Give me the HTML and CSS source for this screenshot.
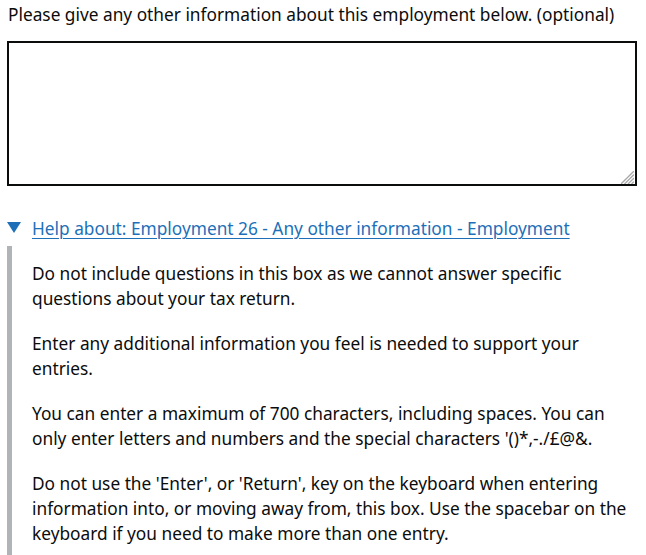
FILE: index.html
```html
<!DOCTYPE html>
<html lang="en">
<head>
<meta charset="utf-8">
<title>Any other information</title>
<link rel="stylesheet" href="styles.css">
</head>
<body>
<div class="page">
  <div class="form-group">
    <label class="label" for="other-info">Please give any other information about this employment below. (optional)</label>
    <div class="textarea-wrap">
      <textarea class="textarea" id="other-info" name="other-info"></textarea>
      <svg class="grip" width="13" height="13" viewBox="0 0 13 13" aria-hidden="true">
        <line x1="0" y1="13" x2="13" y2="0" />
        <line x1="3.5" y1="13" x2="13" y2="3.5" />
        <line x1="7" y1="13" x2="13" y2="7" />
        <line x1="10.5" y1="13" x2="13" y2="10.5" />
      </svg>
    </div>
  </div>
  <details class="details" open>
    <summary class="summary"><span class="summary-text">Help about: Employment 26 - Any other information - Employment</span></summary>
    <div class="details-text">
      <p class="body">Do not include questions in this box as we cannot answer specific questions about your tax return.</p>
      <p class="body">Enter any additional information you feel is needed to support your entries.</p>
      <p class="body">You can enter a maximum of 700 characters, including spaces. You can only enter letters and numbers and the special characters '()*,-./£@&amp;.</p>
      <p class="body">Do not use the 'Enter', or 'Return', key on the keyboard when entering information into, or moving away from, this box. Use the spacebar on the keyboard if you need to make more than one entry.</p>
    </div>
  </details>
</div>
</body>
</html>
```
FILE: styles.css
```css
html, body {
  margin: 0;
  padding: 0;
  background: #ffffff;
}
body {
  font-family: "Noto Sans", "Open Sans", sans-serif;
  font-size: 17.3px;
  line-height: 25px;
  color: #0b0c0c;
}
.page {
  margin: 0 8px 0 7px;
  padding-top: 2px;
}
.form-group {
  display: flex;
  flex-direction: column;
  margin-bottom: 30px;
}
.label {
  display: block;
  padding-left: 1px;
  margin-bottom: 14px;
  white-space: nowrap;
}
.textarea-wrap {
  position: relative;
  width: 630px;
  height: 145px;
}
.textarea {
  display: block;
  box-sizing: border-box;
  width: 630px;
  height: 145px;
  margin: 0;
  padding: 5px;
  border: 2px solid #0b0c0c;
  border-radius: 0;
  font: inherit;
  resize: none;
}
.grip {
  position: absolute;
  right: 3px;
  bottom: 2px;
  pointer-events: none;
}
.grip line {
  stroke: #a8a8a8;
  stroke-width: 1.3;
}
.details {
  display: block;
}
.summary {
  display: block;
  list-style: none;
  position: relative;
  padding-left: 25px;
  margin-bottom: 5px;
  color: #1d70b8;
  cursor: pointer;
}
.summary::-webkit-details-marker {
  display: none;
}
.summary::before {
  content: "";
  position: absolute;
  left: 0;
  top: 6px;
  width: 0;
  height: 0;
  border-style: solid;
  border-width: 11px 7px 0 7px;
  border-color: #1d70b8 transparent transparent transparent;
}
.summary-text {
  text-decoration: underline;
  text-decoration-thickness: 1px;
  text-underline-offset: 3px;
}
.details-text {
  border-left: 5px solid #b1b4b6;
  padding: 15px 0 15px 20px;
}
.body {
  margin: 0 0 20px;
}
.body:last-child {
  margin-bottom: 0;
}
```
